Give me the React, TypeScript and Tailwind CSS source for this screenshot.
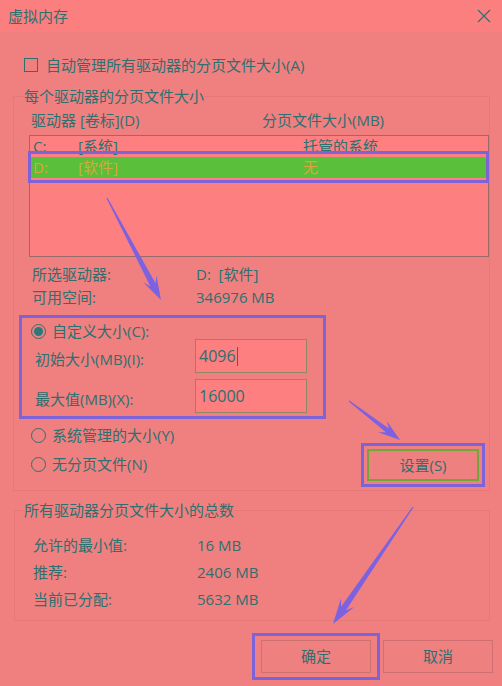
import React from 'react';

const ink = 'text-[#2e6f6f]';

type Pt = [number, number];

function arrowPoints(tail: Pt, tip: Pt, hl: number, hw: number, sw: number) {
  const dx = tip[0] - tail[0];
  const dy = tip[1] - tail[1];
  const len = Math.hypot(dx, dy);
  const ux = dx / len;
  const uy = dy / len;
  const nx = -uy;
  const ny = ux;
  const at = (back: number, side: number): string =>
    `${tip[0] - ux * back + nx * side},${tip[1] - uy * back + ny * side}`;
  return [
    `${tail[0] + nx * 0.6},${tail[1] + ny * 0.6}`,
    at(hl * 0.72, sw / 2),
    at(hl, hw / 2),
    `${tip[0]},${tip[1]}`,
    at(hl, -hw / 2),
    at(hl * 0.72, -sw / 2),
    `${tail[0] - nx * 0.6},${tail[1] - ny * 0.6}`,
  ].join(' ');
}

function Radio({ on }: { on?: boolean }) {
  return (
    <span className="w-[15px] h-[15px] rounded-full border border-[#2e6f6f] flex items-center justify-center shrink-0">
      {on && <span className="w-[9px] h-[9px] rounded-full bg-[#2a7a7a]" />}
    </span>
  );
}

function InfoRow({ label, value, h }: { label: string; value: string; h: string }) {
  return (
    <div className={`flex items-center ${h}`}>
      <span className="w-[182px] pl-[18px]">{label}</span>
      <span className="whitespace-pre">{value}</span>
    </div>
  );
}

export default function App() {
  return (
    <div
      className={`relative w-[502px] h-[686px] bg-[#f08080] overflow-hidden text-[15px] ${ink}`}
      style={{ fontFamily: '"Open Sans", "Noto Sans CJK SC", sans-serif' }}
    >
      {/* title bar */}
      <div className="h-[32px] bg-[#fc7f7f] flex items-center justify-between pl-[8px] pr-[11px]">
        <span className="leading-none">虚拟内存</span>
        <svg width="14" height="14" viewBox="0 0 14 14" className="stroke-[#2e6f6f]">
          <path d="M1 1 L13 13 M13 1 L1 13" strokeWidth="1.1" fill="none" />
        </svg>
      </div>

      {/* auto manage */}
      <div className="mt-[23px] h-[20px] flex items-center pl-[24px] gap-[8px]">
        <span className="w-[14px] h-[14px] border border-[#2e6f6f]" />
        <span className="leading-none">自动管理所有驱动器的分页文件大小(A)</span>
      </div>

      {/* per drive group */}
      <fieldset className="mt-[11px] ml-[13px] w-[477px] h-[405px] border border-[#e57878] px-0">
        <legend className="ml-[10px] h-[20px] leading-[20px] px-0">每个驱动器的分页文件大小</legend>

        <div className="mt-[4px] h-[20px] flex items-center">
          <span className="w-[248px] pl-[17px]">驱动器 [卷标](D)</span>
          <span>分页文件大小(MB)</span>
        </div>

        <div className="mt-[5px] ml-[15px] w-[460px] h-[122px] border border-[#9a6a6a] bg-[#fd7f7f] pt-[1px]">
          <div className="h-[19px] flex items-center text-[#2e6f6f] leading-none">
            <span className="w-[48px] pl-[3px]">C:</span>
            <span className="w-[225px]">[系统]</span>
            <span>托管的系统</span>
          </div>
          <div className="relative h-[21px] mt-[1px] bg-[#5abf3a] flex items-center text-[#dea43a] leading-none">
            <span className="w-[48px] pl-[3px]">D:</span>
            <span className="w-[225px]">[软件]</span>
            <span>无</span>
            <span className="absolute -left-[2px] -right-[1px] -top-[6px] -bottom-[5px] border-[3px] border-[#7d62d8]" />
          </div>
        </div>

        <div className="mt-[6px]">
          <InfoRow label="所选驱动器:" value="D:  [软件]" h="h-[23px]" />
          <InfoRow label="可用空间:" value="346976 MB" h="h-[23px]" />
        </div>

        {/* custom size (annotated) */}
        <div className="mt-[6px] ml-[5px] w-[307px] h-[104px] border-[3px] border-[#7d62d8]">
          <div className="mt-[5px] h-[16px] flex items-center gap-[6px] pl-[9px]">
            <Radio on />
            <span className="leading-none">自定义大小(C):</span>
          </div>
          <div className="h-[34px] flex">
            <span className="w-[173px] pl-[13px] pt-[10px] leading-[20px]">初始大小(MB)(I):</span>
            <div className="w-[112px] h-[34px] border border-[#8e8a60] bg-[#fd7f7f] flex items-center pl-[3px] text-[16px]">
              4096<span className="w-px h-[19px] bg-[#2e6f6f] ml-[1px]" />
            </div>
          </div>
          <div className="mt-[6px] h-[34px] flex">
            <span className="w-[173px] pl-[13px] pt-[10px] leading-[20px]">最大值(MB)(X):</span>
            <div className="w-[112px] h-[34px] border border-[#8e8a60] bg-[#fd7f7f] flex items-center pl-[3px] text-[16px]">
              16000
            </div>
          </div>
        </div>

        <div className="mt-[6px] flex items-start justify-between pr-[4px]">
          <div className="flex flex-col gap-[9px] pl-[17px]">
            <div className="h-[20px] flex items-center gap-[6px]">
              <Radio />
              <span className="leading-none">系统管理的大小(Y)</span>
            </div>
            <div className="h-[20px] flex items-center gap-[6px]">
              <Radio />
              <span className="leading-none">无分页文件(N)</span>
            </div>
          </div>
          <div className="mt-[18px] w-[124px] h-[44px] border-[3px] border-[#7d62d8] p-[3px]">
            <div className="w-full h-full border-2 border-[#6ea83c] bg-[#ee8080] flex items-center justify-center leading-none">
              设置(S)
            </div>
          </div>
        </div>
      </fieldset>

      {/* totals group */}
      <fieldset className="mt-[9px] ml-[14px] w-[476px] h-[121px] border border-[#e57878] px-0">
        <legend className="ml-[9px] h-[20px] leading-[20px] px-0">所有驱动器分页文件大小的总数</legend>
        <div className="mt-[12px]">
          <InfoRow label="允许的最小值:" value="16 MB" h="h-[27px]" />
          <InfoRow label="推荐:" value="2406 MB" h="h-[27px]" />
          <InfoRow label="当前已分配:" value="5632 MB" h="h-[27px]" />
        </div>
      </fieldset>

      {/* dialog buttons */}
      <div className="mt-[19px] flex justify-end gap-[12px] pr-[9px]">
        <div className="relative w-[110px] h-[33px]">
          <div className="w-full h-full border border-[#cf7070] bg-[#ee8080] flex items-center justify-center leading-none">
            确定
          </div>
          <span className="absolute -left-[9px] -right-[9px] -top-[7px] -bottom-[7px] border-[3px] border-[#7d62d8]" />
        </div>
        <div className="w-[110px] h-[33px] border border-[#cf7070] bg-[#ee8080] flex items-center justify-center leading-none">
          取消
        </div>
      </div>

      {/* annotation arrows */}
      <svg className="absolute inset-0 pointer-events-none" width="502" height="686">
        <polygon points={arrowPoints([107, 198], [161, 300], 24, 15, 6)} fill="#7d62e0" />
        <polygon points={arrowPoints([349, 401], [400, 440], 22, 14, 5)} fill="#7d62e0" />
        <polygon points={arrowPoints([413, 507], [333, 624], 26, 16, 6)} fill="#7d62e0" />
      </svg>
    </div>
  );
}
